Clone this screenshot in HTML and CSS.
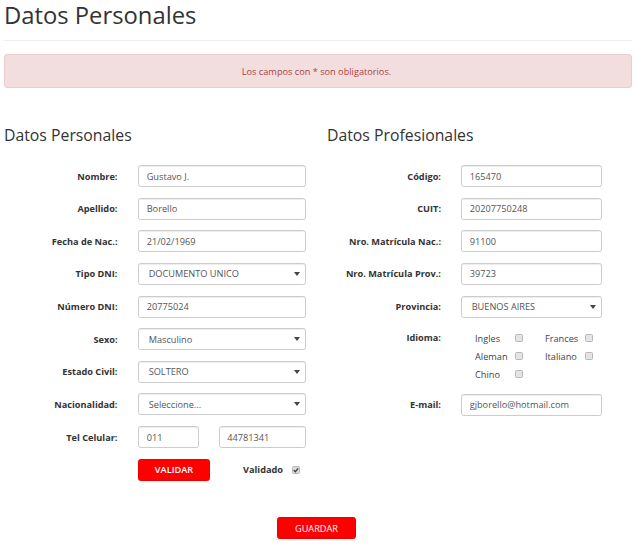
FILE: index.html
```html
<!DOCTYPE html>
<html lang="es">
<head>
<meta charset="utf-8">
<title>Datos Personales</title>
<link rel="stylesheet" href="styles.css">
</head>
<body>
<div class="page">
  <h1 class="title">Datos Personales</h1>
  <hr class="rule">
  <div class="alert">Los campos con * son obligatorios.</div>

  <div class="columns">
    <section class="col col-left">
      <h3 class="section-title">Datos Personales</h3>
      <div class="form form-left">
        <label class="lbl">Nombre:</label>
        <input class="field" type="text" value="Gustavo J.">

        <label class="lbl">Apellido:</label>
        <input class="field" type="text" value="Borello">

        <label class="lbl">Fecha de Nac.:</label>
        <input class="field" type="text" value="21/02/1969">

        <label class="lbl">Tipo DNI:</label>
        <div class="sel"><select class="field select"><option>DOCUMENTO UNICO</option></select></div>

        <label class="lbl">Número DNI:</label>
        <input class="field" type="text" value="20775024">

        <label class="lbl">Sexo:</label>
        <div class="sel"><select class="field select"><option>Masculino</option></select></div>

        <label class="lbl">Estado Civil:</label>
        <div class="sel"><select class="field select"><option>SOLTERO</option></select></div>

        <label class="lbl">Nacionalidad:</label>
        <div class="sel"><select class="field select"><option>Seleccione...</option></select></div>

        <label class="lbl">Tel Celular:</label>
        <div class="tel">
          <input class="field tel-area" type="text" value="011">
          <input class="field tel-num" type="text" value="44781341">
        </div>

        <span class="lbl"></span>
        <div class="validate">
          <button class="btn btn-validar" type="button">VALIDAR</button>
          <span class="validado">Validado</span>
          <span class="cb cb-checked"><svg viewBox="0 0 8 8" width="8" height="8"><path d="M1.8 4.1 L3.3 5.7 L6.2 2.3" fill="none" stroke="#3a3a3a" stroke-width="1.3"/></svg></span>
        </div>
      </div>
    </section>

    <section class="col col-right">
      <h3 class="section-title">Datos Profesionales</h3>
      <div class="form form-right">
        <label class="lbl">Código:</label>
        <input class="field" type="text" value="165470">

        <label class="lbl">CUIT:</label>
        <input class="field" type="text" value="20207750248">

        <label class="lbl">Nro. Matrícula Nac.:</label>
        <input class="field" type="text" value="91100">

        <label class="lbl">Nro. Matrícula Prov.:</label>
        <input class="field" type="text" value="39723">

        <label class="lbl">Provincia:</label>
        <div class="sel"><select class="field select"><option>BUENOS AIRES</option></select></div>

        <label class="lbl lbl-top">Idioma:</label>
        <div class="langs">
          <div class="lang"><span class="lang-name">Ingles</span><span class="cb"></span></div>
          <div class="lang"><span class="lang-name">Frances</span><span class="cb"></span></div>
          <div class="lang"><span class="lang-name">Aleman</span><span class="cb"></span></div>
          <div class="lang"><span class="lang-name">Italiano</span><span class="cb"></span></div>
          <div class="lang"><span class="lang-name">Chino</span><span class="cb"></span></div>
        </div>

        <label class="lbl">E-mail:</label>
        <input class="field" type="text" value="gjborello@hotmail.com">
      </div>
    </section>
  </div>

  <div class="actions">
    <button class="btn btn-guardar" type="button">GUARDAR</button>
  </div>
</div>
</body>
</html>
```

FILE: styles.css
```css
html, body {
  margin: 0;
  padding: 0;
}

body {
  font-family: "Open Sans", "DejaVu Sans", sans-serif;
  font-size: 9.2px;
  color: #333;
  background: #fff;
}

.page {
  padding: 0 4px;
}

.title {
  margin: 2px 0 0;
  font-size: 23.8px;
  font-weight: 400;
  line-height: 26.4px;
  color: #333;
}

.rule {
  border: 0;
  border-top: 1px solid #eee;
  margin: 11.6px 0 13px;
}

.alert {
  height: 34px;
  box-sizing: border-box;
  border: 1px solid #ebccd1;
  background: #f2dede;
  color: #a94442;
  border-radius: 3px;
  display: flex;
  align-items: center;
  justify-content: center;
  padding-right: 3px;
}

.columns {
  display: flex;
  margin-top: 39px;
}

.col-left {
  width: 323px;
  flex: none;
}

.col-right {
  flex: 1;
}

.section-title {
  margin: 0 0 20.6px;
  font-size: 15.8px;
  font-weight: 400;
  line-height: 17.4px;
  color: #333;
}

.form {
  display: grid;
  row-gap: 10.625px;
  align-items: center;
}

.form-left {
  grid-template-columns: 113.5px 167.5px;
  column-gap: 20.5px;
}

.form-right {
  grid-template-columns: 114px 141px;
  column-gap: 20px;
}

.lbl {
  display: block;
  text-align: right;
  font-weight: 700;
  color: #333;
}

.lbl-top {
  align-self: start;
  line-height: 18px;
  padding-top: 1px;
}

.field {
  display: block;
  box-sizing: border-box;
  width: 100%;
  height: 22px;
  margin: 0;
  padding: 0 7.7px;
  border: 1px solid #ccc;
  border-radius: 2.6px;
  background: #fff;
  box-shadow: inset 0 1px 1px rgba(0, 0, 0, 0.075);
  font-family: inherit;
  font-size: 9.2px;
  color: #555;
  outline: none;
}

.sel {
  position: relative;
}

.select {
  -webkit-appearance: none;
  appearance: none;
  padding-left: 9.7px;
}

.sel::after {
  content: "";
  position: absolute;
  right: 6px;
  top: 50%;
  margin-top: -2px;
  border-left: 3px solid transparent;
  border-right: 3px solid transparent;
  border-top: 4.5px solid #444;
}

.tel {
  display: flex;
  justify-content: space-between;
}

.tel-area {
  width: 61px;
}

.tel-num {
  width: 87px;
}

.validate {
  display: flex;
  align-items: center;
}

.btn {
  box-sizing: border-box;
  height: 22px;
  padding: 0;
  border: 1px solid #ee0000;
  border-radius: 2.6px;
  background: #ff0000;
  color: #fff;
  font-family: inherit;
  font-size: 9.2px;
  font-weight: 400;
  cursor: pointer;
}

.btn-validar {
  width: 72px;
  font-weight: 600;
}

.validado {
  margin-left: 33px;
  font-weight: 700;
  color: #333;
}

.cb {
  display: inline-block;
  flex: none;
  box-sizing: border-box;
  width: 8px;
  height: 8px;
  border: 1px solid #b8b8b8;
  background: #e4e4e4;
  border-radius: 1.5px;
  position: relative;
}

.cb-checked {
  margin-left: 9px;
  background: #dcdcdc;
}

.cb-checked svg {
  position: absolute;
  left: -1px;
  top: -1px;
}

.langs {
  display: grid;
  grid-template-columns: 70px 70px;
  grid-auto-rows: 18px;
  padding-left: 14px;
  padding-top: 1px;
}

.lang {
  display: flex;
  align-items: center;
}

.lang-name {
  width: 40px;
  color: #444;
}

.actions {
  display: flex;
  justify-content: center;
  margin-top: 36.4px;
  padding-right: 3px;
}

.btn-guardar {
  width: 79px;
}
```
